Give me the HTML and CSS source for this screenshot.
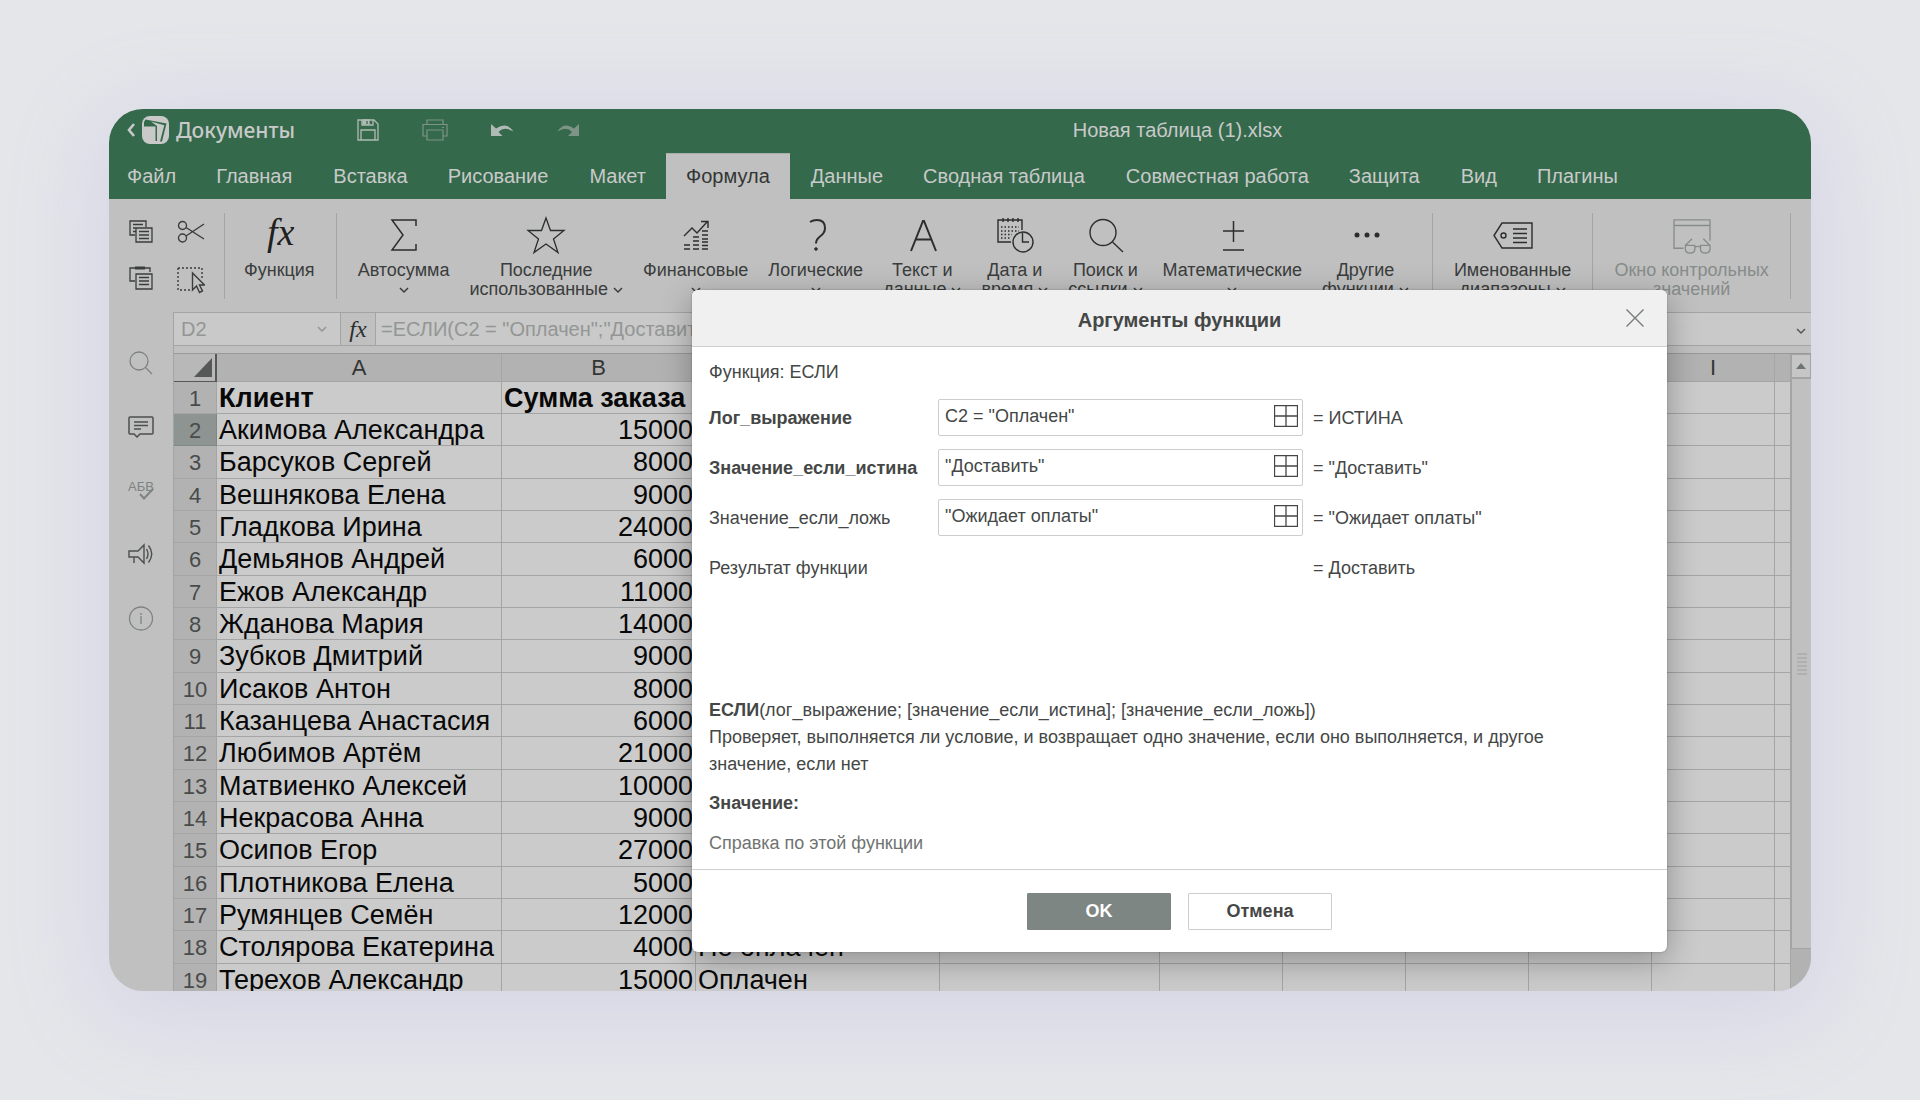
FILE: index.html
```html
<!DOCTYPE html>
<html lang="ru">
<head>
<meta charset="utf-8">
<title>Новая таблица (1).xlsx</title>
<link rel="stylesheet" href="styles.css">
</head>
<body>
<svg class="defs" aria-hidden="true">
  <symbol id="chev" viewBox="0 0 10 7"><path d="M1 1l4 4 4-4" fill="none" stroke="currentColor" stroke-width="1.5"/></symbol>
  <symbol id="range" viewBox="0 0 24 22"><path d="M.5.5h23v21H.5zM12 .5v21M.5 11h23" fill="none" stroke="currentColor" stroke-width="1.3"/></symbol>
</svg>
<main class="app">
  <header class="titlebar">
    <a class="brand" href="#">
      <svg width="8" height="14" viewBox="0 0 8 14"><path d="M7 1L2 7l5 6" fill="none" stroke="currentColor" stroke-width="2.6"/></svg>
      <svg class="logo" width="27" height="28" viewBox="0 0 27 28"><rect width="27" height="28" rx="8" fill="currentColor"/><path d="M3.500 3.500L24.500 7.500 20 25.500h-2L22.300 9.200 9 5.500 15 10v15h-1.500V10.500H2V6z" fill="#34694c"/></svg>
      <span>Документы</span>
    </a>
    <div class="quick">
      <button aria-label="Сохранить"><svg width="22" height="22" viewBox="0 0 22 22" fill="none" stroke="currentColor" stroke-width="1.3"><path d="M1 1h16l4 4v16H1zM5 1v5h11V1M4 21V11h14v10"/><path d="M6 1h6v4H6z" fill="currentColor"/><path d="M10 2v3" stroke="#34694c"/></svg></button>
      <button aria-label="Печать" class="dim"><svg width="26" height="22" viewBox="0 0 26 22" fill="none" stroke="currentColor" stroke-width="1.2"><path d="M5 5.500V1h16v4.500M5 17H1V5.500h24V17h-4M5 11h16v10H5zM20 8.500h2"/></svg></button>
      <button aria-label="Отменить"><svg width="23" height="12" viewBox="0 0 23 12"><path d="M0 0v12h11.500L7.500 8Q13 2 22.500 7.500 16-2.500 5 4.500Z" fill="currentColor"/></svg></button>
      <button aria-label="Повторить" class="dim"><svg width="22" height="12" viewBox="0 0 22 12"><path d="M22 0v12H11l4-4Q9.500 2 .5 7.500 7-2.500 17 4.500Z" fill="currentColor"/></svg></button>
    </div>
    <h1>Новая таблица (1).xlsx</h1>
  </header>
  <nav class="tabs">
    <a href="#">Файл</a><a href="#">Главная</a><a href="#">Вставка</a><a href="#">Рисование</a><a href="#">Макет</a><a href="#" class="on">Формула</a><a href="#">Данные</a><a href="#">Сводная таблица</a><a href="#">Совместная работа</a><a href="#">Защита</a><a href="#">Вид</a><a href="#">Плагины</a>
  </nav>
  <div class="ribbon">
    <div class="clip">
      <button aria-label="Копировать"><svg width="24" height="24" viewBox="0 0 24 24" fill="none" stroke="currentColor" stroke-width="1.3"><path d="M6 15H1V1h16v6M4 4.500h10M4 8h3M4 11.500h3M7 8h16v14H7zM10 11.500h10M10 15h10M10 18.500h10"/></svg></button>
      <button aria-label="Вырезать"><svg width="28" height="24" viewBox="0 0 28 24" fill="none" stroke="currentColor" stroke-width="1.4"><circle cx="5.500" cy="5.500" r="4"/><circle cx="5.500" cy="18" r="4"/><path d="M9 7.500L27 19M9 16L27 4"/></svg></button>
      <button aria-label="Вставить"><svg width="24" height="24" viewBox="0 0 24 24" fill="none" stroke="currentColor" stroke-width="1.3"><path d="M6 15H1V2h20v4M7 8h16v15H7zM10 11.500h10M10 15h10M10 18.500h10"/><path d="M6 2h10" stroke-width="3"/></svg></button>
      <button aria-label="Выделить"><svg width="28" height="28" viewBox="0 0 28 28" fill="none" stroke="currentColor" stroke-width="1.4"><path d="M1 2h24v12M1 2v22h13" stroke-dasharray="2 2"/><path d="M15.500 7v17l4-4 3 6.500 3-1.500-3-6h5z"/></svg></button>
    </div>
    <i class="sep"></i>
    <button class="tool"><svg width="36" height="36" viewBox="0 0 36 36"><text x="6" y="28" class="fx-big">fx</text></svg><span>Функция</span></button>
    <i class="sep"></i>
    <button class="tool"><svg width="36" height="36" viewBox="0 0 36 36" fill="none" stroke="currentColor" stroke-width="1.5"><path d="M30 9V3H6l11 15L6 33h24v-6"/></svg><span>Автосумма<br><svg class="chev"><use href="#chev"/></svg></span></button>
    <button class="tool"><svg width="38" height="36" viewBox="0 0 38 36" fill="none" stroke="currentColor" stroke-width="1.3"><path d="M19 1l4.500 12.500H37L26.500 22 31 35.500l-12-8.500-12 8.500L11.500 22 1 13.500h13.500z"/></svg><span>Последние<br>использованные <svg class="chev"><use href="#chev"/></svg></span></button>
    <button class="tool"><svg width="36" height="36" viewBox="0 0 36 36" fill="none" stroke="currentColor" stroke-width="1.4"><path d="M6 19l8-8 5 5L29 5M23 4.500h7V11M6 28h6M6 32h6M15 20h6M15 24h6M15 28h6M15 32h6M24 14h6M24 18h6M24 22h6M24 25h6M24 28.500h6M24 32h6"/></svg><span>Финансовые<br><svg class="chev"><use href="#chev"/></svg></span></button>
    <button class="tool"><svg width="36" height="36" viewBox="0 0 36 36" fill="none" stroke="currentColor" stroke-width="2"><path d="M12 5Q15 3 19 3q8 0 8 8 0 5-5 8.500-4 3-4 7"/><circle cx="18" cy="32" r="1.300" fill="currentColor" stroke-width="1"/></svg><span>Логические<br><svg class="chev"><use href="#chev"/></svg></span></button>
    <button class="tool"><svg width="36" height="36" viewBox="0 0 36 36" fill="none" stroke="currentColor" stroke-width="2"><path d="M7 34L19 4h1l12 30M11.500 22.500h16"/></svg><span>Текст и<br>данные <svg class="chev"><use href="#chev"/></svg></span></button>
    <button class="tool"><svg width="38" height="36" viewBox="0 0 38 36" fill="none" stroke="currentColor" stroke-width="1.4"><path d="M15 25H2V3h24v10"/><path d="M7 1v4M12 1v4M17 1v4M22 1v4"/><path d="M5 10h18M5 14h18M5 17.500h11M5 21h9" stroke-dasharray="1.500 2"/><circle cx="27" cy="25" r="10"/><path d="M26.500 16v9H33"/></svg><span>Дата и<br>время <svg class="chev"><use href="#chev"/></svg></span></button>
    <button class="tool"><svg width="36" height="36" viewBox="0 0 36 36" fill="none" stroke="currentColor" stroke-width="1.4"><circle cx="16" cy="15.500" r="13"/><path d="M25.500 25L36 35"/></svg><span>Поиск и<br>ссылки <svg class="chev"><use href="#chev"/></svg></span></button>
    <button class="tool"><svg width="36" height="36" viewBox="0 0 36 36" fill="none" stroke="currentColor" stroke-width="1.5"><path d="M9 14h21M19.500 4v21M9 33h21"/></svg><span>Математические<br><svg class="chev"><use href="#chev"/></svg></span></button>
    <button class="tool"><svg width="36" height="36" viewBox="0 0 36 36" fill="currentColor"><circle cx="10" cy="18" r="2.500"/><circle cx="20" cy="18" r="2.500"/><circle cx="30" cy="18" r="2.500"/></svg><span>Другие<br>функции <svg class="chev"><use href="#chev"/></svg></span></button>
    <i class="sep wide"></i>
    <button class="tool"><svg width="40" height="36" viewBox="0 0 40 36" fill="none" stroke="currentColor" stroke-width="1.4"><path d="M1 18.500L9 6h30v25H9zM20 12h14M20 16.500h14M20 21h14M20 25.500h14"/><circle cx="10.500" cy="18.500" r="2.500"/></svg><span>Именованные<br>диапазоны <svg class="chev"><use href="#chev"/></svg></span></button>
    <i class="sep"></i>
    <button class="tool dim" disabled><svg width="40" height="38" viewBox="0 0 40 38" fill="none" stroke="currentColor" stroke-width="1.4"><path d="M11 33H1V3h38v22M1 9h38M13 30h10v4q0 4-5 4t-5-4zM29 30h10v4q0 4-5 4t-5-4zM23 32q3-2 6 0M13 30l7-7M39 30l-7-7"/></svg><span>Окно контрольных<br>значений</span></button>
    <i class="sep"></i>
  </div>
  <div class="work">
    <aside class="side">
      <button class="dim" aria-label="Поиск"><svg width="26" height="26" viewBox="0 0 26 26" fill="none" stroke="currentColor" stroke-width="1.3"><circle cx="11" cy="11" r="9"/><path d="M17.500 17.500L24 24"/></svg></button>
      <button aria-label="Комментарии"><svg width="26" height="26" viewBox="0 0 26 26" fill="none" stroke="currentColor" stroke-width="1.5"><path d="M2 3h22q1 0 1 1v15q0 1-1 1H12l-3 3-3-3H2q-1 0-1-1V4q0-1 1-1zM6 8h14M6 11.500h14M6 15h7"/></svg></button>
      <button class="dim" aria-label="Проверка орфографии"><svg width="28" height="26" viewBox="0 0 28 26" fill="none" stroke="currentColor" stroke-width="2"><text x="1" y="13" class="abc">АБВ</text><path d="M13 16l4 4.500L26 11"/></svg></button>
      <button aria-label="Обратная связь"><svg width="26" height="26" viewBox="0 0 26 26" fill="none" stroke="currentColor" stroke-width="1.4"><path d="M1 9h9l6-6v18l-6-6H1zM6 15v6M18.500 7q3 5 0 10M20.500 3.500q6.500 8.500 0 17"/></svg></button>
      <button class="dim" aria-label="О программе"><svg width="26" height="26" viewBox="0 0 26 26" fill="none" stroke="currentColor" stroke-width="1.3"><circle cx="13" cy="12.500" r="11.500"/><path d="M13 10v8M13 7v2"/></svg></button>
    </aside>
    <section class="sheet">
      <div class="fbar">
        <label class="cellname"><input value="D2" aria-label="Имя ячейки" readonly><svg class="chev"><use href="#chev"/></svg></label>
        <button class="fx" aria-label="Вставить функцию">fx</button>
        <input class="formula" aria-label="Формула" readonly value="=ЕСЛИ(C2 = &quot;Оплачен&quot;;&quot;Доставить&quot;;&quot;Ожидает оплаты&quot;)">
        <button class="expand" aria-label="Развернуть"><svg class="chev"><use href="#chev"/></svg></button>
      </div>
      <div class="gridwrap">
        <table class="grid">
          <colgroup><col class="cn"><col class="ca"><col class="cb"><col class="cc"><col class="cd"><col class="ce"><col class="ce"><col class="ce"><col class="ce"><col class="ce"><col></colgroup>
          <thead><tr><th class="corner"><svg width="18" height="19" viewBox="0 0 18 19"><path d="M18 0v19H0z" fill="#555857"/></svg></th><th>A</th><th>B</th><th>C</th><th>D</th><th>E</th><th>F</th><th>G</th><th>H</th><th>I</th><th></th></tr></thead>
          <tbody>
            <tr class="bold"><th>1</th><td>Клиент</td><td>Сумма заказа</td><td></td><td></td><td></td><td></td><td></td><td></td><td></td><td></td></tr>
            <tr class="cur"><th>2</th><td>Акимова Александра</td><td class="n">15000</td><td></td><td></td><td></td><td></td><td></td><td></td><td></td><td></td></tr>
            <tr><th>3</th><td>Барсуков Сергей</td><td class="n">8000</td><td></td><td></td><td></td><td></td><td></td><td></td><td></td><td></td></tr>
            <tr><th>4</th><td>Вешнякова Елена</td><td class="n">9000</td><td></td><td></td><td></td><td></td><td></td><td></td><td></td><td></td></tr>
            <tr><th>5</th><td>Гладкова Ирина</td><td class="n">24000</td><td></td><td></td><td></td><td></td><td></td><td></td><td></td><td></td></tr>
            <tr><th>6</th><td>Демьянов Андрей</td><td class="n">6000</td><td></td><td></td><td></td><td></td><td></td><td></td><td></td><td></td></tr>
            <tr><th>7</th><td>Ежов Александр</td><td class="n">11000</td><td></td><td></td><td></td><td></td><td></td><td></td><td></td><td></td></tr>
            <tr><th>8</th><td>Жданова Мария</td><td class="n">14000</td><td></td><td></td><td></td><td></td><td></td><td></td><td></td><td></td></tr>
            <tr><th>9</th><td>Зубков Дмитрий</td><td class="n">9000</td><td></td><td></td><td></td><td></td><td></td><td></td><td></td><td></td></tr>
            <tr><th>10</th><td>Исаков Антон</td><td class="n">8000</td><td></td><td></td><td></td><td></td><td></td><td></td><td></td><td></td></tr>
            <tr><th>11</th><td>Казанцева Анастасия</td><td class="n">6000</td><td></td><td></td><td></td><td></td><td></td><td></td><td></td><td></td></tr>
            <tr><th>12</th><td>Любимов Артём</td><td class="n">21000</td><td></td><td></td><td></td><td></td><td></td><td></td><td></td><td></td></tr>
            <tr><th>13</th><td>Матвиенко Алексей</td><td class="n">10000</td><td></td><td></td><td></td><td></td><td></td><td></td><td></td><td></td></tr>
            <tr><th>14</th><td>Некрасова Анна</td><td class="n">9000</td><td></td><td></td><td></td><td></td><td></td><td></td><td></td><td></td></tr>
            <tr><th>15</th><td>Осипов Егор</td><td class="n">27000</td><td></td><td></td><td></td><td></td><td></td><td></td><td></td><td></td></tr>
            <tr><th>16</th><td>Плотникова Елена</td><td class="n">5000</td><td></td><td></td><td></td><td></td><td></td><td></td><td></td><td></td></tr>
            <tr><th>17</th><td>Румянцев Семён</td><td class="n">12000</td><td></td><td></td><td></td><td></td><td></td><td></td><td></td><td></td></tr>
            <tr><th>18</th><td>Столярова Екатерина</td><td class="n">4000</td><td>Не оплачен</td><td></td><td></td><td></td><td></td><td></td><td></td><td></td></tr>
            <tr><th>19</th><td>Терехов Александр</td><td class="n">15000</td><td>Оплачен</td><td></td><td></td><td></td><td></td><td></td><td></td><td></td></tr>
          </tbody>
        </table>
        <div class="scroll">
          <button aria-label="Вверх"><svg width="10" height="6" viewBox="0 0 10 6"><path d="M0 6l5-6 5 6z" fill="#6f7573"/></svg></button>
          <div class="thumb"><svg width="10" height="22" viewBox="0 0 10 22"><path d="M0 1h10M0 5h10M0 9h10M0 13h10M0 17h10M0 21h10" stroke="#a0a0a0"/></svg></div>
          <div class="rest"></div>
        </div>
      </div>
    </section>
  </div>

  <form class="dialog" role="dialog" aria-labelledby="dlg-title">
    <div class="dhead"><h2 id="dlg-title">Аргументы функции</h2><button type="button" aria-label="Закрыть"><svg width="18" height="18" viewBox="0 0 18 18"><path d="M.5.5l17 17M17.500.5l-17 17" stroke="currentColor" stroke-width="1.400"/></svg></button></div>
    <div class="dbody">
      <p class="fn">Функция: ЕСЛИ</p>
      <div class="args">
        <label for="a1"><b>Лог_выражение</b></label><div class="field"><input id="a1" value="C2 = &quot;Оплачен&quot;"><button type="button" aria-label="Выбрать диапазон"><svg width="24" height="22"><use href="#range"/></svg></button></div><output>= ИСТИНА</output>
        <label for="a2"><b>Значение_если_истина</b></label><div class="field"><input id="a2" value="&quot;Доставить&quot;"><button type="button" aria-label="Выбрать диапазон"><svg width="24" height="22"><use href="#range"/></svg></button></div><output>= "Доставить"</output>
        <label for="a3">Значение_если_ложь</label><div class="field"><input id="a3" value="&quot;Ожидает оплаты&quot;"><button type="button" aria-label="Выбрать диапазон"><svg width="24" height="22"><use href="#range"/></svg></button></div><output>= "Ожидает оплаты"</output>
        <span>Результат функции</span><span></span><output>= Доставить</output>
      </div>
      <div class="desc">
        <p><b>ЕСЛИ</b>(лог_выражение; [значение_если_истина]; [значение_если_ложь])</p>
        <p>Проверяет, выполняется ли условие, и возвращает одно значение, если оно выполняется, и другое значение, если нет</p>
      </div>
      <p class="val"><b>Значение:</b></p>
      <a href="#">Справка по этой функции</a>
    </div>
    <div class="dfoot"><button type="button" class="ok">OK</button><button type="button">Отмена</button></div>
  </form>
</main>
</body>
</html>
```
FILE: styles.css
```css
* { box-sizing: border-box; }
body {
  margin: 0;
  padding: 109px;
  height: 100vh;
  background: #e5e6ea;
  font: 18px/20px "Liberation Sans", Arial, sans-serif;
  color: #3a3d3c;
  overflow: hidden;
}
button, input { font: inherit; color: inherit; background: none; border: 0; padding: 0; margin: 0; min-width: 0; outline: 0; }
a { color: inherit; text-decoration: none; }
h1, h2, p { margin: 0; font-size: inherit; font-weight: inherit; }
svg { display: block; flex: none; }
.defs { position: absolute; width: 0; height: 0; }
.chev { display: inline-block; width: 10px; height: 7px; vertical-align: 1px; }

.app {
  position: relative;
  height: 100%;
  display: flex;
  flex-direction: column;
  background: #c0c0c0;
  border-radius: 34px;
  box-shadow: 0 16px 90px 16px #d6d6e6;
}

/* title bar and tabs */
.titlebar {
  flex: none;
  height: 44px;
  display: flex;
  align-items: center;
  padding: 0 35px 3px 18px;
  background: #34694c;
  border-radius: 34px 34px 0 0;
  color: #c9c9c9;
}
.brand { display: flex; align-items: center; gap: 7px; font: 500 21px/24px "Noto Sans", sans-serif; width: 230px; }
.quick { display: flex; align-items: center; gap: 43px; }
.quick button { color: #b0bab4; }
.quick .dim { color: #7d9487; }
.titlebar h1 { flex: 1; text-align: center; font-size: 20px; }
.tabs { flex: none; height: 46px; display: flex; background: #34694c; color: #c9c9c9; font-size: 20px; }
.tabs a { line-height: 46px; height: 46px; padding: 0 20px; }
.tabs a:nth-child(odd) { margin-left: 1px; }
.tabs a:first-child { padding-left: 17px; }
.tabs .on { background: #c0c0c0; color: #333635; line-height: 44px; border-top: 1px solid #a8b0ab; }

/* ribbon */
.ribbon { flex: none; height: 113px; display: flex; align-items: flex-start; padding-top: 14px; }
.clip { display: grid; grid-template-columns: 24px 28px; gap: 18px 24px; padding: 7px 19px 0 20px; }
.clip button { height: 28px; display: flex; align-items: flex-start; }
.ribbon .sep { flex: none; width: 1px; height: 86px; background: #a2a5a4; margin: 0 11px; }
.ribbon .clip + .sep { margin: 0 9px 0 0; }
.ribbon .wide { margin-left: 13px; }
.ribbon > .sep:last-child { margin-right: 0; }
.tool { padding: 4px 10px 0; display: flex; flex-direction: column; align-items: center; gap: 8px; line-height: 19px; white-space: nowrap; text-align: center; }
.tool > svg { height: 36px; color: #2b2e2d; overflow: visible; }
.tool.dim, .tool.dim > svg { color: #868c8a; }
.fx-big { font: italic 38px "Liberation Serif", serif; fill: #1e2120; }

/* work area */
.work { flex: 1; min-height: 0; display: flex; }
.side { flex: none; width: 65px; border-right: 1px solid #a2a5a4; display: flex; flex-direction: column; align-items: center; gap: 38px; padding-top: 38px; }
.side button { height: 26px; color: #4b4f4e; }
.side .dim { color: #7d8381; }
.abc { font: 13px "Liberation Sans", sans-serif; fill: currentColor; stroke: none; }
.sheet { flex: 1; min-width: 0; display: flex; flex-direction: column; border-radius: 0 0 34px 0; overflow: hidden; }
.fbar { flex: none; height: 34px; display: flex; border: 1px solid #a2a5a4; border-width: 1px 0; background: #c9c9c9; color: #939695; font-size: 20px; }
.cellname { width: 167px; display: flex; align-items: center; padding: 0 13px 0 7px; border-right: 1px solid #a2a5a4; }
.cellname input { flex: 1; }
.fx { width: 35px; background: #c0c0c0; border-right: 1px solid #a2a5a4; font: italic 24px "Liberation Serif", serif; color: #2b2e2d; }
.formula { flex: 1; padding-left: 5px; text-overflow: clip; }
.expand { width: 20px; color: #555857; line-height: 20px; }
.gridwrap { flex: 1; min-height: 0; display: flex; margin-top: 7px; border-top: 1px solid #979a99; overflow: hidden; align-items: flex-start; }
.grid { flex: 1; min-width: 0; width: 100%; table-layout: fixed; border-collapse: separate; border-spacing: 0; background: #cbcbcb; }
.cn { width: 43px; } .ca { width: 285px; } .cb { width: 194px; } .cc { width: 244px; } .cd { width: 220px; } .ce { width: 123px; }
.grid th, .grid td { height: 32px; padding: 0; border: 1px solid #a4a6a5; border-width: 0 1px 1px 0; white-space: nowrap; overflow: hidden; line-height: 28px; }
.grid tbody tr:nth-child(3n) > * { height: 33px; }
.grid th { background: #b2b2b2; color: #484b4a; font-weight: 400; font-size: 22px; }
.grid thead th { height: 28px; line-height: 25px; color: #333635; }
.grid tbody th { padding-top: 2px; }
.grid .corner { border-color: #555857; border-right-width: 2px; background: #b8b8b8; }
.corner svg { margin: 0 3px 0 auto; }
.grid td { padding: 0 0 0 2px; font-size: 27px; color: #080808; }
.grid .n { text-align: right; padding-right: 2px; }
.grid .bold td { font-weight: 700; }
.grid .cur th { background: #8e9492; border-color: #7d8a84; }
.scroll { flex: none; width: 20px; align-self: stretch; display: flex; flex-direction: column; background: #b2b2b2; }
.scroll button { flex: none; height: 24px; display: flex; align-items: center; justify-content: center; background: #c6c6c6; border: 1px solid #a2a5a4; }
.thumb { flex: 1; background: #c0c0c0; border: 1px solid #a2a5a4; border-right: 0; display: flex; align-items: center; justify-content: center; }
.rest { flex: none; height: 42px; }

/* dialog */
.dialog {
  position: absolute;
  top: 181px;
  left: 583px;
  width: 975px;
  background: #fff;
  border-radius: 6px;
  box-shadow: 0 8px 32px rgba(0, 0, 0, .3), 0 0 2px rgba(0, 0, 0, .3);
  color: #444746;
}
.dhead { height: 57px; display: grid; grid-template-columns: 1fr auto 1fr; align-items: center; background: #f0f0f0; border-bottom: 1px solid #cfcfd2; border-radius: 6px 6px 0 0; padding: 0 23px 0 0; }
.dhead h2 { grid-column: 2; padding-left: 23px; font-size: 20px; font-weight: 700; padding-top: 3px; }
.dhead button { justify-self: end; color: #777b79; }
.dbody { padding: 15px 16px 0 17px; height: 523px; border-bottom: 1px solid #cfcfd2; }
.args { display: grid; grid-template-columns: 219px 365px 1fr; column-gap: 10px; row-gap: 14px; align-items: center; grid-auto-rows: 36px; margin-top: 17px; }
.args > label, .args > output, .args > span { white-space: nowrap; padding-top: 2px; }
.field { height: 37px; display: flex; align-items: center; border: 1px solid #cdcdd1; border-radius: 2px; padding: 0 4px 2px 6px; }
.field input { flex: 1; height: 31px; }
.desc { margin-top: 112px; padding-right: 60px; line-height: 27px; }
.val { margin: 15px 0 20px; }
.dbody > a { color: #6f7371; }
.dfoot { height: 82px; display: flex; gap: 17px; justify-content: center; align-items: center; }
.dfoot button { width: 144px; height: 37px; border: 1px solid #cdcdd1; font-weight: 700; border-radius: 1px; }
.dfoot .ok { background: #7e8684; border-color: #7e8684; color: #fff; }
```
